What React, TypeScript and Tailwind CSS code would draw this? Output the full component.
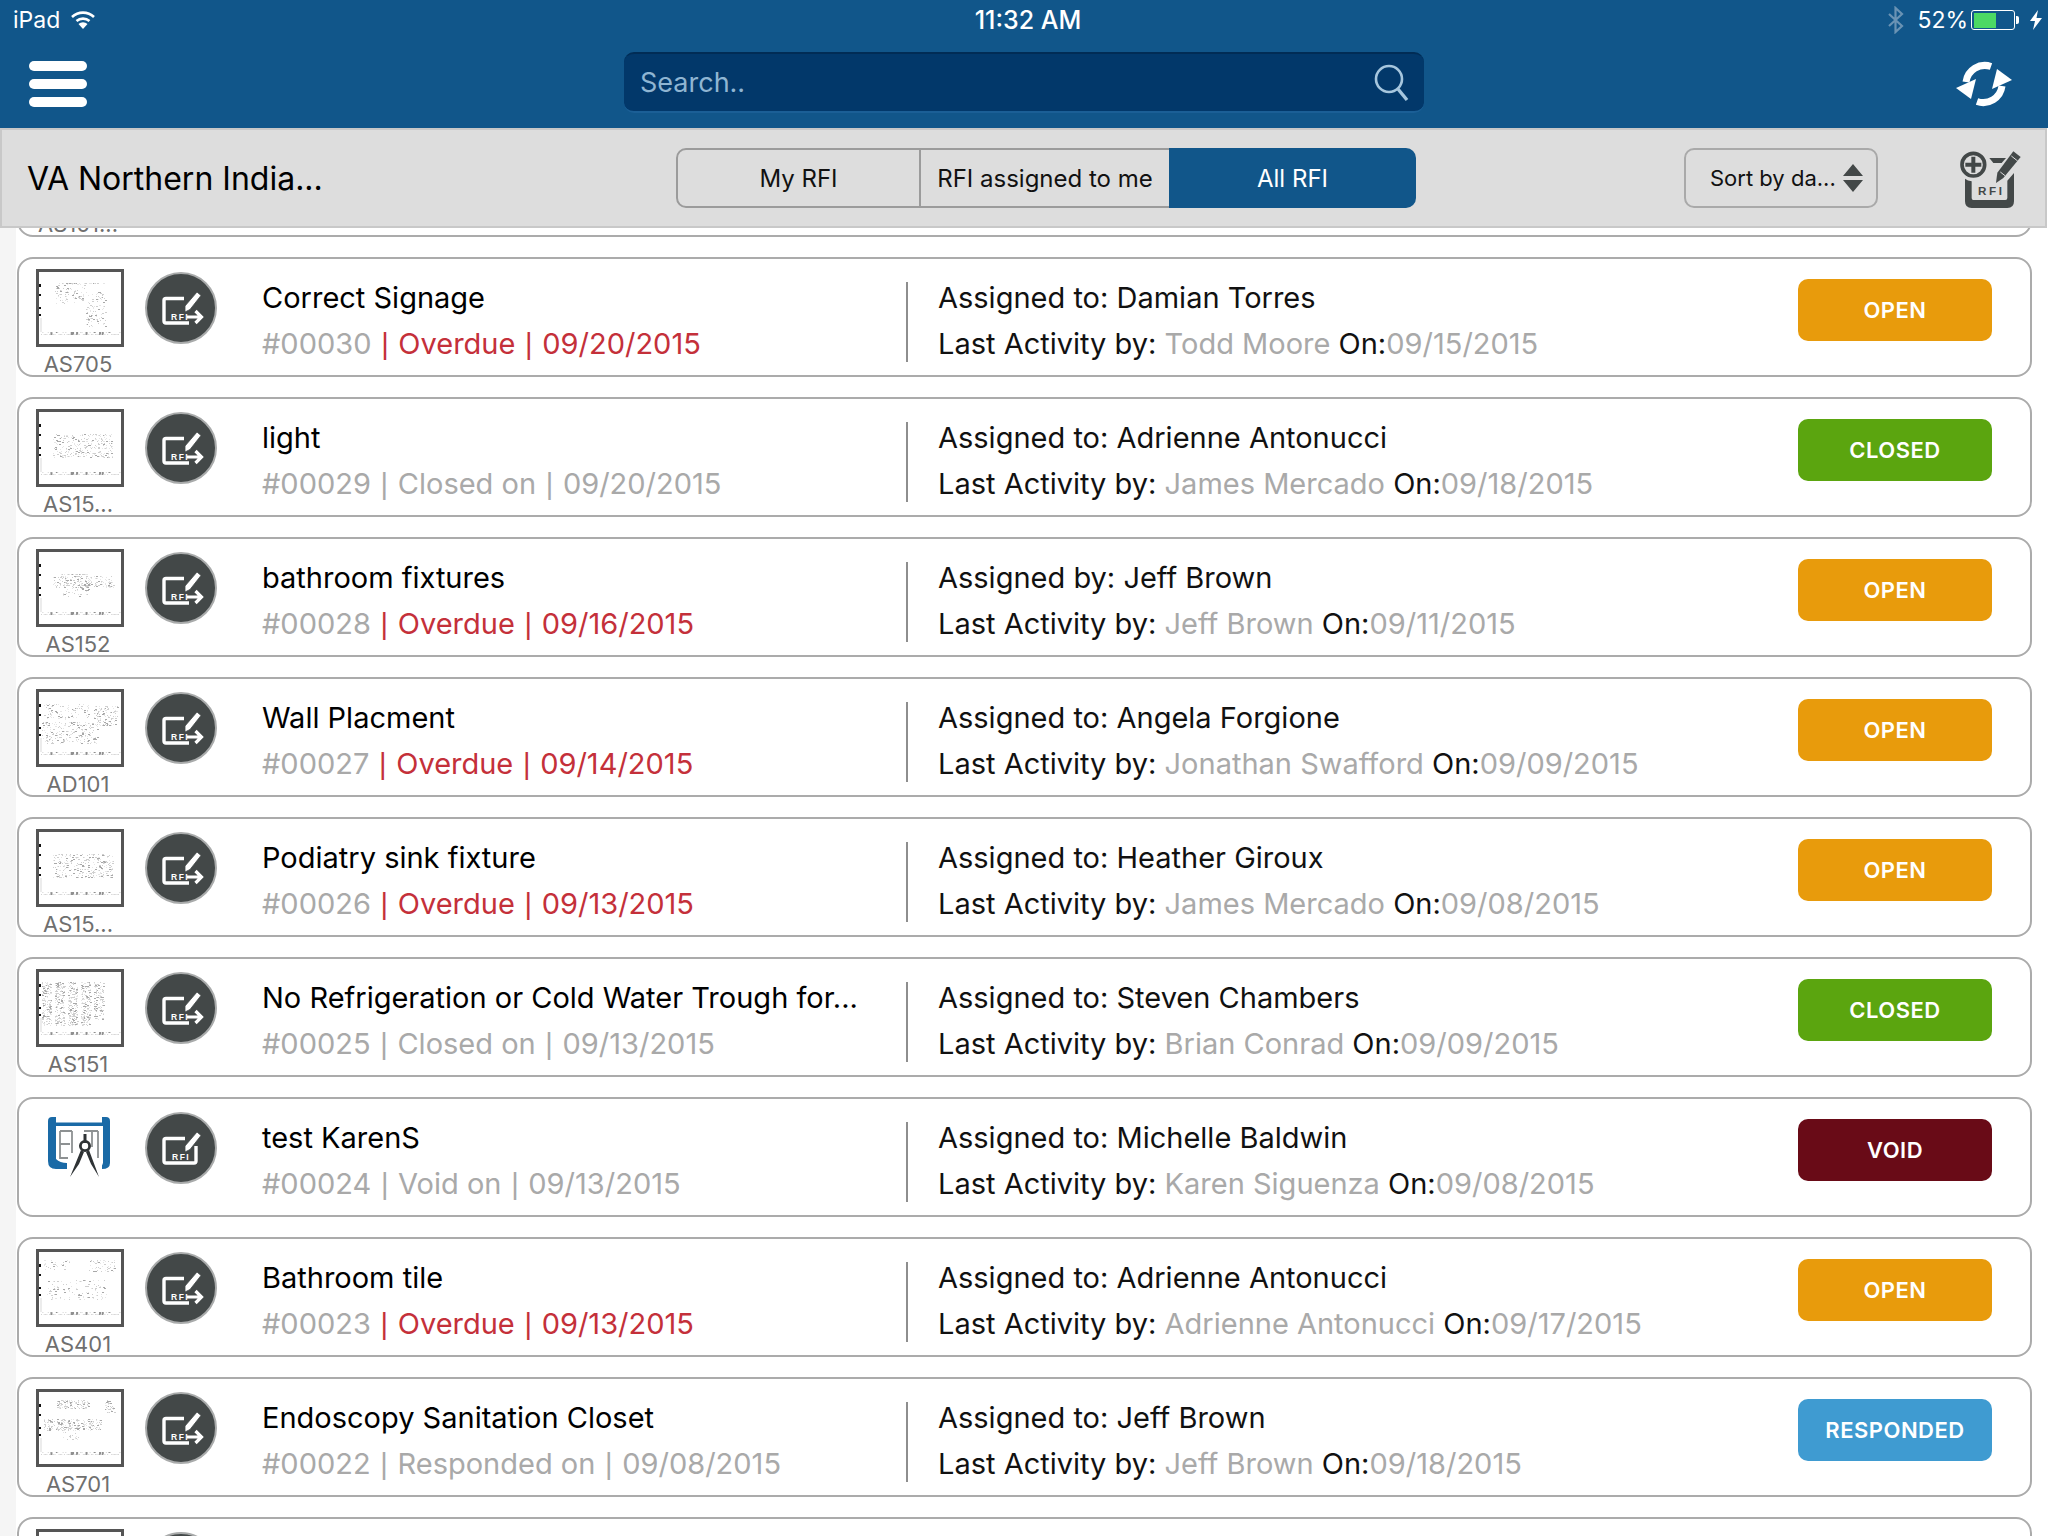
import React from "react";

type Region = [number, number, number, number, number];

const rand = (seed: number) => {
  let s = seed;
  return () => {
    s = (s * 9301 + 49297) % 233280;
    return s / 233280;
  };
};

function Thumb({ regions, seed }: { regions: Region[]; seed: number }) {
  const r = rand(seed);
  const marks: React.ReactElement[] = [];
  regions.forEach(([x, y, w, h, d], ri) => {
    const count = Math.round(w * h * d);
    for (let i = 0; i < count; i++) {
      const mx = Math.floor(x + r() * w);
      const my = Math.floor(y + r() * h);
      const v = r();
      marks.push(
        <rect key={`${ri}-${i}`} x={mx} y={my} width={v > 0.75 ? 2 : 1} height={1} fill={v > 0.85 ? "#a8a8a8" : v > 0.45 ? "#cfcfcf" : "#e6e6e6"} />
      );
    }
  });
  const base = rand(7);
  const strip: React.ReactElement[] = [];
  for (let i = 0; i < 60; i++) {
    const v = base();
    strip.push(<rect key={i} x={2 + i * 1.35} y={v > 0.5 ? 60 : 62} width={v > 0.7 ? 2 : 1} height={v > 0.8 ? 3 : 1} fill={v > 0.7 ? "#8f8f8f" : "#d4d4d4"} />);
  }
  return (
    <div className="w-[88px] h-[78px] border-[3px] border-[#555] bg-white">
      <svg width="82" height="72" viewBox="0 0 82 72" className="block">
        <rect x="0" y="12" width="2" height="3" fill="#111" />
        <rect x="0" y="22" width="2" height="2" fill="#111" />
        <rect x="0" y="35" width="2" height="2" fill="#111" />
        <rect x="0" y="42" width="2" height="2" fill="#111" />
        <rect x="1" y="46" width="2" height="14" fill="#ececec" />
        {strip}
        {marks}
      </svg>
    </div>
  );
}

function RfiBadge({ arrow, partial }: { arrow: boolean; partial?: boolean }) {
  return (
    <div className="w-[72px] h-[72px] rounded-full bg-[#434848] border-2 border-[#a9abab] flex items-center justify-center">
      <svg width="68" height="68" viewBox="0 0 68 68" className="block">
        {arrow ? (
          <path d="M37 24.500H19q-2 0-2 2V47q0 2 2 2H42" fill="none" stroke="#fff" strokeWidth="3.4" />
        ) : (
          <path d="M38 24.500H19q-2 0-2 2V47q0 2 2 2H47q2 0 2-2V32" fill="none" stroke="#fff" strokeWidth="3.4" />
        )}
        <path d="M38 38l0-6 12-14 4 3.500-11 14z" fill="#fff" stroke="#434848" strokeWidth="0.8" />
        {!partial && (
          <text x={arrow ? 24 : 25} y="46" fontSize="8.5" fontWeight="700" fill="#fff" letterSpacing="1.5" fontFamily="'Liberation Sans', sans-serif">RFI</text>
        )}
        {arrow && <path d="M40 43H54M48.500 37l6 6-6 6" fill="none" stroke="#fff" strokeWidth="3.2" />}
      </svg>
    </div>
  );
}

function Logo() {
  return (
    <svg width="64" height="62" viewBox="0 0 64 62" className="block mt-[8px] ml-[12px]">
      <path d="M4 0h4v5.500h46V0h4q4 0 4 4V46q0 6-8 6v-3.500q1-2 1-3V9H8V42q4 4 11 4v6H8q-8 0-8-8V4q0-4 4-4z" fill="#1a6aa6" />
      <path d="M12 14V41H20M12 14H24M12 27H22M24 14V36M50 14V41M36 14H50M44 14V30" fill="none" stroke="#8d9192" strokeWidth="1.8" />
      <circle cx="37" cy="29" r="4.600" fill="none" stroke="#2f3335" strokeWidth="2.8" />
      <rect x="35.500" y="17" width="3" height="9" fill="#2f3335" />
      <path d="M33 33L22 60l9-13 5-12zM41 33l10 27-8-13-5-12z" fill="#2f3335" />
    </svg>
  );
}

function SyncIcon() {
  return (
    <svg width="60" height="48" viewBox="0 0 60 48" className="block">
      <path d="M36 5.500A19 19 0 0 0 11 21" fill="none" stroke="#fff" strokeWidth="7" />
      <path d="M1 27L21 18l-5 20z" fill="#fff" />
      <g transform="rotate(180 29 23)">
        <path d="M36 5.500A19 19 0 0 0 11 21" fill="none" stroke="#fff" strokeWidth="7" />
        <path d="M1 27L21 18l-5 20z" fill="#fff" />
      </g>
    </svg>
  );
}

function AddRfi() {
  return (
    <svg width="80" height="80" viewBox="0 0 240 240" className="block">
      <circle cx="70" cy="80" r="34" fill="none" stroke="#434848" strokeWidth="11" />
      <path d="M70 56V104M46 80H94" stroke="#434848" strokeWidth="12" fill="none" />
      <path d="M118 60H168L155 75H130z" fill="#434848" />
      <path d="M45 122V190Q45 210 65 210H172Q192 210 192 190V105L172 128V180Q172 186 166 186H70Q65 186 65 180V130Q53 128 45 122z" fill="#434848" />
      <path d="M190 40L212 57 160 120 138 135 142 104z" fill="#434848" />
      <path d="M184 54l19 15" stroke="#ddd" strokeWidth="3" />
      <path d="M151 102l14 11" stroke="#ddd" strokeWidth="3" />
      <text x="84" y="171" fontSize="35" fontWeight="700" letterSpacing="8" fill="#434848" fontFamily="'Liberation Sans', sans-serif">RFI</text>
    </svg>
  );
}

const Pipe = () => <span className="font-['Liberation_Sans',sans-serif] px-[1.5px]">|</span>;

type Row = {
  label?: string;
  title: string;
  num: string;
  overdue: boolean;
  state: string;
  date: string;
  who: string;
  by: string;
  on: string;
  status: "OPEN" | "CLOSED" | "VOID" | "RESPONDED";
  regions?: Region[];
  arrow?: boolean;
};

const rows: Row[] = [
  { label: "AS705", title: "Correct Signage", num: "#00030", overdue: true, state: "Overdue", date: "09/20/2015", who: "Assigned to: Damian Torres", by: "Todd Moore", on: "09/15/2015", status: "OPEN", regions: [[16, 12, 30, 20, 0.14], [47, 20, 20, 35, 0.14], [20, 11, 48, 1, 0.8]] },
  { label: "AS15...", title: "light", num: "#00029", overdue: false, state: "Closed on", date: "09/20/2015", who: "Assigned to: Adrienne Antonucci", by: "James Mercado", on: "09/18/2015", status: "CLOSED", regions: [[14, 22, 60, 24, 0.2]] },
  { label: "AS152", title: "bathroom fixtures", num: "#00028", overdue: true, state: "Overdue", date: "09/16/2015", who: "Assigned by: Jeff Brown", by: "Jeff Brown", on: "09/11/2015", status: "OPEN", regions: [[14, 24, 62, 12, 0.28], [24, 36, 26, 9, 0.12], [20, 22, 30, 1, 0.9]] },
  { label: "AD101", title: "Wall Placment", num: "#00027", overdue: true, state: "Overdue", date: "09/14/2015", who: "Assigned to: Angela Forgione", by: "Jonathan Swafford", on: "09/09/2015", status: "OPEN", regions: [[5, 12, 22, 16, 0.14], [28, 12, 22, 14, 0.14], [55, 14, 24, 20, 0.24], [3, 30, 56, 22, 0.18]] },
  { label: "AS15...", title: "Podiatry sink fixture", num: "#00026", overdue: true, state: "Overdue", date: "09/13/2015", who: "Assigned to: Heather Giroux", by: "James Mercado", on: "09/08/2015", status: "OPEN", regions: [[14, 22, 60, 24, 0.2]] },
  { label: "AS151", title: "No Refrigeration or Cold Water Trough for...", num: "#00025", overdue: false, state: "Closed on", date: "09/13/2015", who: "Assigned to: Steven Chambers", by: "Brian Conrad", on: "09/09/2015", status: "CLOSED", regions: [[3, 10, 10, 44, 0.42], [16, 10, 10, 44, 0.42], [29, 10, 10, 44, 0.42], [42, 10, 10, 44, 0.42], [55, 10, 10, 38, 0.3]] },
  { title: "test KarenS", num: "#00024", overdue: false, state: "Void on", date: "09/13/2015", who: "Assigned to: Michelle Baldwin", by: "Karen Siguenza", on: "09/08/2015", status: "VOID", arrow: false },
  { label: "AS401", title: "Bathroom tile", num: "#00023", overdue: true, state: "Overdue", date: "09/13/2015", who: "Assigned to: Adrienne Antonucci", by: "Adrienne Antonucci", on: "09/17/2015", status: "OPEN", regions: [[5, 8, 26, 10, 0.12], [50, 8, 26, 12, 0.16], [8, 28, 60, 20, 0.1]] },
  { label: "AS701", title: "Endoscopy Sanitation Closet", num: "#00022", overdue: false, state: "Responded on", date: "09/08/2015", who: "Assigned to: Jeff Brown", by: "Jeff Brown", on: "09/18/2015", status: "RESPONDED", regions: [[18, 8, 32, 9, 0.4], [66, 8, 10, 14, 0.28], [5, 27, 58, 12, 0.34], [24, 40, 16, 8, 0.14]] },
];

const statusClass: Record<Row["status"], string> = {
  OPEN: "bg-[#e89b0c]",
  CLOSED: "bg-[#5ba50f]",
  VOID: "bg-[#690b17]",
  RESPONDED: "bg-[#3f9bd1]",
};

function PartialCard({ label, regions }: { label?: string; regions: Region[] }) {
  return (
    <div className="h-[120px] shrink-0 mb-[20px] rounded-[16px] border-[2.5px] border-[#ababab] bg-white flex overflow-hidden">
      <div className="w-[100px] pl-[17px] pt-[10px] flex flex-col shrink-0">
        <Thumb regions={regions} seed={77} />
        {label && <div className="w-[88px] text-center text-[22px] leading-[26px] pt-[4px] pr-[4px] text-[#6f6f6f]">{label}</div>}
      </div>
      <div className="w-[143px] pl-[26px] pt-[13px] shrink-0">
        <RfiBadge arrow partial />
      </div>
    </div>
  );
}

function Card({ row, idx }: { row: Row; idx: number }) {
  return (
    <div className="h-[120px] shrink-0 mb-[20px] rounded-[16px] border-[2.5px] border-[#ababab] bg-white flex overflow-hidden">
      <div className="w-[100px] pl-[17px] pt-[10px] flex flex-col shrink-0">
        {row.regions ? <Thumb regions={row.regions} seed={idx * 31 + 11} /> : <Logo />}
        {row.label && <div className="w-[88px] text-center text-[22px] leading-[26px] pt-[4px] pr-[4px] text-[#6f6f6f]">{row.label}</div>}
      </div>
      <div className="w-[143px] pl-[26px] pt-[13px] shrink-0">
        <RfiBadge arrow={row.arrow !== false} />
      </div>
      <div className="w-[644px] pt-[16px] shrink-0">
        <div className="h-[46px] leading-[46px] text-[29px] text-black whitespace-nowrap">{row.title}</div>
        <div className="h-[46px] leading-[46px] text-[29px] text-[#a9a9a9] whitespace-nowrap">
          {row.num}{" "}
          {row.overdue ? (
            <span className="text-[#c4303a]"><Pipe /> {row.state} <Pipe /> {row.date}</span>
          ) : (
            <span><Pipe /> {row.state} <Pipe /> {row.date}</span>
          )}
        </div>
      </div>
      <div className="w-[2px] h-[80px] mt-[23px] bg-[#8e8e8e] shrink-0" />
      <div className="w-[890px] pl-[30px] pt-[16px] shrink-0">
        <div className="h-[46px] leading-[46px] text-[29px] text-[#111] whitespace-nowrap">{row.who}</div>
        <div className="h-[46px] leading-[46px] text-[29px] text-[#111] whitespace-nowrap">
          Last Activity by: <span className="text-[#a9a9a9]">{row.by}</span> On:<span className="text-[#a9a9a9]">{row.on}</span>
        </div>
      </div>
      <div className={`w-[194px] h-[62px] mt-[19.5px] pt-[1px] rounded-[10px] flex items-center justify-center text-white font-semibold text-[22px] tracking-[0.5px] shrink-0 ${statusClass[row.status]}`}>
        {row.status}
      </div>
    </div>
  );
}

export default function App() {
  return (
    <div className="w-[2048px] h-[1536px] overflow-hidden flex flex-col bg-white font-['Inter','Liberation_Sans',sans-serif]">
      <header className="h-[128px] bg-[#11568a] shrink-0 relative z-20 text-white">
        <div className="h-[40px] relative flex items-center justify-between pl-[13px] pr-[6px]">
          <div className="flex items-center gap-[10px] text-[23px] leading-none pt-[1px]">
            <span>iPad</span>
            <svg width="26" height="20" viewBox="0 0 26 20" className="block mb-[2px]">
              <path d="M2 7a16 16 0 0 1 22 0" fill="none" stroke="#fff" strokeWidth="2.6" />
              <path d="M6.500 11a10 10 0 0 1 13 0" fill="none" stroke="#fff" strokeWidth="2.6" />
              <path d="M13 19l-4.500-5a6.500 6.500 0 0 1 9 0z" fill="#fff" />
            </svg>
          </div>
          <div className="absolute left-0 right-0 top-[1px] h-[40px] flex items-center justify-center">
            <span className="text-[25px] font-medium pl-[8px]">11:32 AM</span>
          </div>
          <div className="flex items-center">
            <svg width="18" height="28" viewBox="0 0 18 28" className="block mr-[12px]">
              <path d="M2 8l13 12-6.500 6V2L15 8 2 20" fill="none" stroke="#6a93b4" strokeWidth="2.2" />
            </svg>
            <span className="text-[23px] mr-[3px]">52%</span>
            <div className="w-[44px] h-[20px] rounded-[3px] border border-white p-[1.5px]">
              <div className="w-[22px] h-full bg-[#4cd964]" />
            </div>
            <div className="w-[3px] h-[8px] bg-white rounded-r-[2px] ml-[1px] mr-[11px]" />
            <svg width="12" height="20" viewBox="0 0 12 20" className="block">
              <path d="M8 0L0 11h5l-2 9 9-12H6.500z" fill="#fff" />
            </svg>
          </div>
        </div>
        <div className="h-[88px] flex">
          <div className="w-[624px] pl-[29px] pt-[21px] shrink-0 flex flex-col gap-[8px]">
            <div className="w-[58px] h-[10px] rounded-[5px] bg-white" />
            <div className="w-[58px] h-[10px] rounded-[5px] bg-white" />
            <div className="w-[58px] h-[10px] rounded-[5px] bg-white" />
          </div>
          <div className="w-[800px] h-[61px] mt-[12px] rounded-[10px] bg-[#02386a] border-t-2 border-t-[#012c55] border-b-2 border-b-[#1b5f96] flex items-center justify-between pl-[16px] pr-[14px] shrink-0">
            <span className="text-[27px] text-[#8fb5d2] pt-[2px]">Search..</span>
            <svg width="36" height="38" viewBox="0 0 36 38" className="block">
              <circle cx="15" cy="15" r="13" fill="none" stroke="#a6c6de" strokeWidth="2.6" />
              <path d="M24 25l9 11" stroke="#a6c6de" strokeWidth="3.4" fill="none" />
            </svg>
          </div>
          <div className="ml-[531px] mt-[21px]">
            <SyncIcon />
          </div>
        </div>
      </header>

      <div className="h-[100px] shrink-0 relative z-10 w-[2047px] bg-[#dddddd] border-2 border-[#c8c8c8] flex items-center">
        <div className="w-[674px] pl-[25px] pt-[2px] shrink-0 text-[32px] text-black whitespace-nowrap">VA Northern India...</div>
        <div className="w-[740px] h-[60px] flex shrink-0 text-[24px]">
          <div className="w-[245px] pt-[1px] flex items-center justify-center rounded-l-[10px] border-[2.5px] border-r-2 border-[#9b9b9b] text-[#111]">My RFI</div>
          <div className="w-[248px] pt-[1px] flex items-center justify-center border-y-[2.5px] border-[#9b9b9b] text-[#111] whitespace-nowrap">RFI assigned to me</div>
          <div className="flex-1 pt-[1px] flex items-center justify-center rounded-r-[10px] bg-[#11568a] text-white">All RFI</div>
        </div>
        <div className="ml-[268px] w-[194px] h-[60px] rounded-[10px] border-[2.5px] border-[#a9a9a9] flex items-center pl-[24px] text-[22px] text-[#111] shrink-0 whitespace-nowrap">
          <span className="w-[133px] pt-[1px]">Sort by da...</span>
          <svg width="20" height="28" viewBox="0 0 20 28" className="block">
            <path d="M10 0l10 12H0zM10 28L0 16h20z" fill="#434848" />
          </svg>
        </div>
        <div className="ml-[72px] shrink-0">
          <AddRfi />
        </div>
      </div>

      <div className="flex-1 min-h-0 bg-white relative">
        <div className="absolute left-0 top-0 bottom-0 w-[16px] bg-[#f5f5f5]" />
        <div className="relative pl-[17px] pr-[16px] mt-[-111px]">
          <PartialCard label="AS101..." regions={[]} />
          {rows.map((r, i) => (
            <Card key={i} row={r} idx={i} />
          ))}
          <PartialCard regions={[[10, 10, 50, 30, 0.14]]} />
        </div>
      </div>
    </div>
  );
}
